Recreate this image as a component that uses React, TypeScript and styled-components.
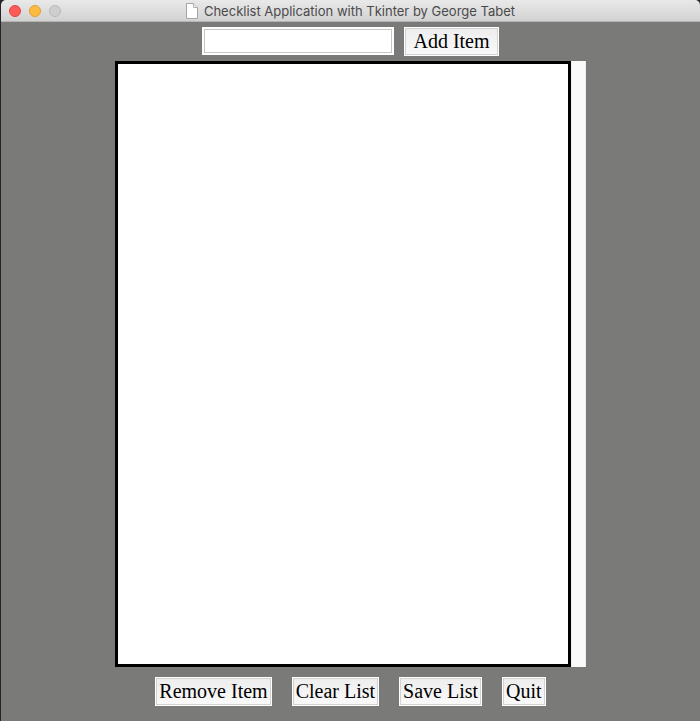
import React, { FormEvent, useState } from "react";
import styled, { createGlobalStyle } from "styled-components";

const GlobalStyle = createGlobalStyle`
  *, *::before, *::after {
    box-sizing: border-box;
  }
  body {
    margin: 0;
    background: #262425;
  }
`;

const AppWindow = styled.div`
  display: flex;
  flex-direction: column;
  min-height: 100vh;
  border-left: 1px solid #262425;
  font-family: "Liberation Serif", "Times New Roman", serif;
  font-size: 20px;
`;

const TitleBar = styled.header`
  display: grid;
  grid-template-columns: 1fr auto 1fr;
  align-items: center;
  height: 22px;
  padding: 0 8px;
  background: linear-gradient(#e9e9e9, #d2d2d2);
  border-bottom: 1px solid #b4b4b3;
  border-radius: 5px 5px 0 0;
`;

const WindowControls = styled.div`
  display: flex;
  gap: 8px;
`;

const WindowControl = styled.button<{ $fill: string; $edge: string }>`
  width: 12px;
  height: 12px;
  padding: 0;
  border: 1px solid ${(p) => p.$edge};
  border-radius: 50%;
  background: ${(p) => p.$fill};
`;

const Title = styled.h1`
  display: flex;
  align-items: center;
  gap: 6px;
  margin: 0;
  color: #4a4a4a;
  font: 400 13px/20px Inter, sans-serif;
  white-space: nowrap;
`;

const Content = styled.main`
  flex: 1;
  display: flex;
  flex-direction: column;
  padding: 5px 0 15px;
  background: #7a7a78;
`;

const EntryForm = styled.form`
  display: flex;
  justify-content: center;
  align-items: flex-start;
  gap: 10px;
  margin-bottom: 5px;
`;

const EntryInput = styled.input`
  width: 192px;
  height: 28px;
  padding: 0 4px;
  border: 2px solid #fff;
  outline: 1px solid #c3c5c6;
  outline-offset: -3px;
  background: #fff;
  color: #000;
  font: inherit;
`;

const PushButton = styled.button<{ $width?: number }>`
  width: ${(p) => (p.$width ? `${p.$width}px` : "auto")};
  height: 29px;
  padding: 0 3px;
  border: 1px solid #fff;
  outline: 1px solid #d2d2d2;
  outline-offset: -2px;
  background: linear-gradient(#ededed, #fafafa);
  color: #000;
  font: inherit;
  line-height: 27px;
  white-space: nowrap;
`;

const ListArea = styled.div`
  flex: 1;
  display: flex;
  margin: 0 114px;
`;

const ItemList = styled.select`
  flex: 1;
  min-width: 0;
  padding: 0;
  border: 3px solid #000;
  border-radius: 0;
  outline: none;
  background: #fff;
  color: #000;
  font: inherit;
`;

const ScrollTrack = styled.div`
  width: 15px;
  background: #fafafa;
  border-left: 1px solid #f0f0f0;
  border-right: 1px solid #ededed;
`;

const Actions = styled.div`
  display: flex;
  justify-content: center;
  gap: 20px;
  margin-top: 10px;
`;

function DocumentIcon() {
  return (
    <svg width="12" height="16" viewBox="0 0 12 16" aria-hidden="true">
      <path d="M.5.5h7l4 4v11H.5z" fill="#fff" stroke="#a5a5a5" />
      <path d="M7.5.5v4h4" fill="#ededed" stroke="#b2b2b2" />
    </svg>
  );
}

export default function App() {
  const [draft, setDraft] = useState("");
  const [items, setItems] = useState<string[]>([]);
  const [selected, setSelected] = useState<string[]>([]);

  const addItem = (event: FormEvent) => {
    event.preventDefault();
    if (!draft.trim()) return;
    setItems([...items, draft]);
    setDraft("");
  };

  const removeItem = () => {
    setItems(items.filter((_, index) => !selected.includes(String(index))));
    setSelected([]);
  };

  const clearList = () => {
    setItems([]);
    setSelected([]);
  };

  const saveList = () => localStorage.setItem("checklist", JSON.stringify(items));

  return (
    <>
      <GlobalStyle />
      <AppWindow>
        <TitleBar>
          <WindowControls>
            <WindowControl aria-label="Close" $fill="#fc5b57" $edge="#e2463f" />
            <WindowControl aria-label="Minimize" $fill="#fdbc40" $edge="#df9e34" />
            <WindowControl aria-label="Zoom" disabled $fill="#cecece" $edge="#b9b9b9" />
          </WindowControls>
          <Title>
            <DocumentIcon />
            Checklist Application with Tkinter by George Tabet
          </Title>
        </TitleBar>
        <Content>
          <EntryForm onSubmit={addItem}>
            <EntryInput
              aria-label="New item"
              value={draft}
              onChange={(event) => setDraft(event.target.value)}
            />
            <PushButton type="submit" $width={95}>
              Add Item
            </PushButton>
          </EntryForm>
          <ListArea>
            <ItemList
              multiple
              aria-label="Checklist"
              value={selected}
              onChange={(event) =>
                setSelected(Array.from(event.target.selectedOptions, (option) => option.value))
              }
            >
              {items.map((item, index) => (
                <option key={index} value={index}>
                  {item}
                </option>
              ))}
            </ItemList>
            <ScrollTrack aria-hidden="true" />
          </ListArea>
          <Actions>
            <PushButton type="button" onClick={removeItem}>
              Remove Item
            </PushButton>
            <PushButton type="button" onClick={clearList}>
              Clear List
            </PushButton>
            <PushButton type="button" onClick={saveList}>
              Save List
            </PushButton>
            <PushButton type="button" onClick={() => window.close()}>
              Quit
            </PushButton>
          </Actions>
        </Content>
      </AppWindow>
    </>
  );
}
